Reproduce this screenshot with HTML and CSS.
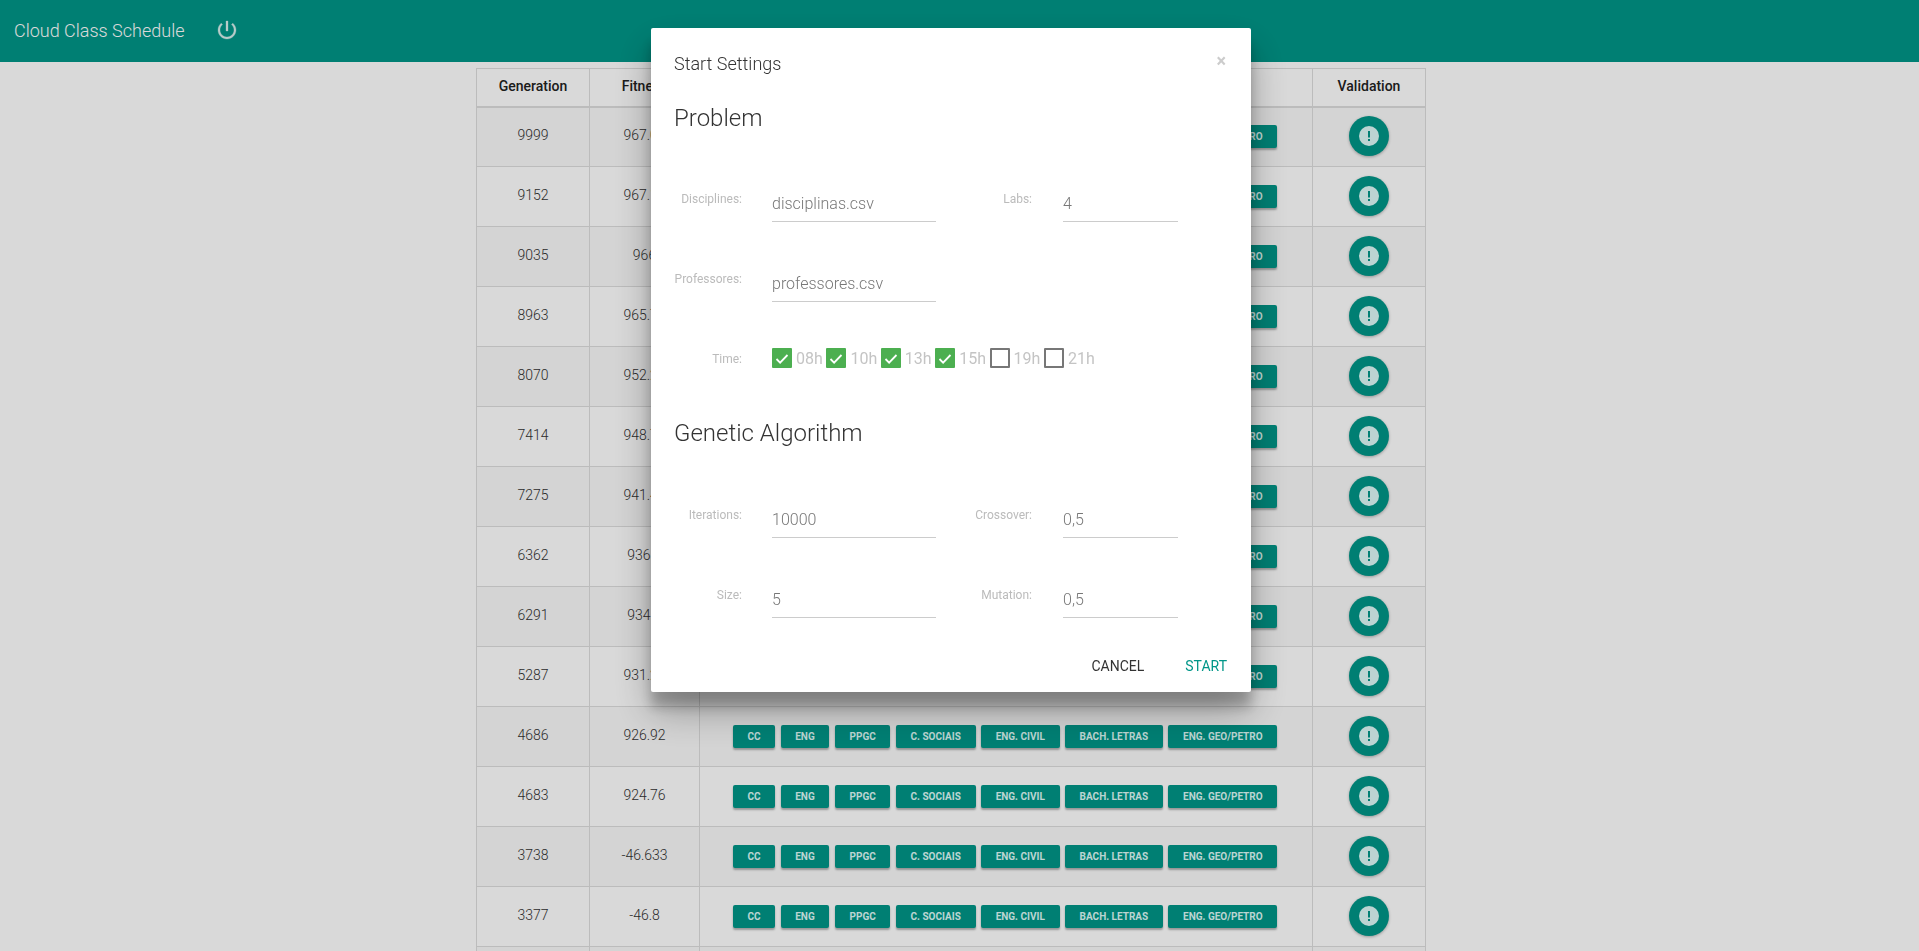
FILE: index.html
```html
<!DOCTYPE html>
<html lang="en">
<head>
    <meta charset="UTF-8">
    <title>Cloud Class Schedule</title>
    <link rel="stylesheet" href="styles.css">
</head>
<body>
    <header class="topbar">
        <span class="brand">Cloud Class Schedule</span>
        <svg class="power" viewBox="0 0 24 24"><path d="M13 3h-2v10h2V3zm4.83 2.17l-1.42 1.42C17.99 7.86 19 9.81 19 12c0 3.87-3.13 7-7 7s-7-3.13-7-7c0-2.19 1.01-4.14 2.58-5.42L6.17 5.17C4.23 6.82 3 9.26 3 12c0 4.97 4.03 9 9 9s9-4.03 9-9c0-2.74-1.23-5.18-3.17-6.83z"/></svg>
    </header>

    <main class="content">
        <table class="results">
            <thead>
                <tr>
                    <th class="col-gen">Generation</th>
                    <th class="col-fit">Fitness</th>
                    <th>Schedules</th>
                    <th class="col-val">Validation</th>
                </tr>
            </thead>
            <tbody id="rows"></tbody>
        </table>
    </main>

    <div class="overlay">
        <div class="modal">
            <div class="modal-head">
                <h4>Start Settings</h4>
                <span class="close">×</span>
            </div>
            <h3 class="first">Problem</h3>
            <div class="field-row">
                <div class="field"><label>Disciplines:</label><span class="input wide">disciplinas.csv</span></div>
                <div class="field"><label class="short">Labs:</label><span class="input">4</span></div>
            </div>
            <div class="field-row">
                <div class="field"><label>Professores:</label><span class="input wide">professores.csv</span></div>
            </div>
            <div class="time-row">
                <label>Time:</label>
                <div class="checks">
                    <span class="check on"><svg viewBox="0 0 20 20"><path d="M4.5 11l3.6 3.6 7.4-7.6"/></svg></span><span class="hour">08h</span>
                    <span class="check on"><svg viewBox="0 0 20 20"><path d="M4.5 11l3.6 3.6 7.4-7.6"/></svg></span><span class="hour">10h</span>
                    <span class="check on"><svg viewBox="0 0 20 20"><path d="M4.5 11l3.6 3.6 7.4-7.6"/></svg></span><span class="hour">13h</span>
                    <span class="check on"><svg viewBox="0 0 20 20"><path d="M4.5 11l3.6 3.6 7.4-7.6"/></svg></span><span class="hour">15h</span>
                    <span class="check"></span><span class="hour">19h</span>
                    <span class="check"></span><span class="hour">21h</span>
                </div>
            </div>
            <h3 class="second">Genetic Algorithm</h3>
            <div class="field-row">
                <div class="field"><label>Iterations:</label><span class="input wide">10000</span></div>
                <div class="field"><label class="short">Crossover:</label><span class="input">0,5</span></div>
            </div>
            <div class="field-row">
                <div class="field"><label>Size:</label><span class="input wide">5</span></div>
                <div class="field"><label class="short">Mutation:</label><span class="input">0,5</span></div>
            </div>
            <div class="modal-foot">
                <button class="flat">Cancel</button>
                <button class="flat primary">Start</button>
            </div>
        </div>
    </div>

    <script>
        var data = [
            ["9999", "967.08"], ["9152", "967.12"], ["9035", "966"], ["8963", "965.72"],
            ["8070", "952.28"], ["7414", "948.76"], ["7275", "941.48"], ["6362", "936.4"],
            ["6291", "934.6"], ["5287", "931.28"], ["4686", "926.92"], ["4683", "924.76"],
            ["3738", "-46.633"], ["3377", "-46.8"]
        ];
        var courses = ["CC", "ENG", "PPGC", "C. SOCIAIS", "ENG. CIVIL", "BACH. LETRAS", "ENG. GEO/PETRO"];
        var btns = courses.map(function(c){ return '<a class="course">' + c + '</a>'; }).join("");
        var icon = '<a class="round"><svg viewBox="0 0 20 20"><circle cx="10" cy="10" r="10" class="disc"/><rect x="9" y="5" width="2" height="6.5" class="mark"/><rect x="9" y="13" width="2" height="2" class="mark"/></svg></a>';
        var html = data.map(function(r){
            return '<tr><td class="num">' + r[0] + '</td><td class="num">' + r[1] + '</td><td class="courses">' + btns + '</td><td class="valid">' + icon + '</td></tr>';
        }).join("");
        // next row only just starts at the bottom of the window
        html += '<tr><td></td><td></td><td></td><td></td></tr>';
        document.getElementById("rows").innerHTML = html;
    </script>
</body>
</html>
```

FILE: styles.css
```css
*{
    box-sizing: border-box;
    margin: 0;
    padding: 0;
}

html, body{
    height: 100%;
    overflow: hidden;
}

body{
    background: #fff;
    color: #333;
    font-family: Roboto, sans-serif;
    font-weight: 300;
    font-size: 14px;
}

.topbar{
    height: 62px;
    background: #009688;
    color: #fff;
    display: flex;
    align-items: center;
    padding: 0 0 2px 14px;
}

.brand{
    font-size: 18px;
    width: 201px;
}

.power{
    width: 24px;
    height: 24px;
    fill: #fff;
    stroke: #fff;
    stroke-width: .3;
    opacity: .85;
}

.content{
    width: 1902px;
    padding-top: 6px;
}

.results{
    width: 950px;
    margin: 0 auto;
    border-collapse: collapse;
    table-layout: fixed;
    text-align: center;
}

.results th, .results td{
    border: 1px solid #ddd;
}

.results th{
    height: 38px;
    padding-bottom: 2px;
    font-weight: 500;
    color: #222;
    border-bottom-width: 2px;
}

.col-gen{ width: 113px; }
.col-fit{ width: 110px; }
.col-val{ width: 113px; }

.results td{
    height: 60px;
}

.results td.num{
    padding-bottom: 3px;
}

.results td.valid{
    padding-bottom: 2px;
}

.results tbody tr:nth-child(odd){
    background: #f9f9f9;
}

.courses{
    font-size: 0;
    padding-right: 2px;
}

.course{
    display: inline-block;
    height: 23px;
    line-height: 23px;
    padding: 0 14.7px;
    margin-right: 5.4px;
    background: #009688;
    color: #ddfaf7;
    font-size: 10px;
    font-weight: 700;
    border-radius: 2px;
    box-shadow: 0 2px 2px rgba(0,0,0,.3);
}

.course:last-child{
    margin-right: 0;
}

.round{
    display: flex;
    align-items: center;
    justify-content: center;
    width: 40px;
    height: 40px;
    margin: 0 auto;
    border-radius: 50%;
    background: #009688;
    box-shadow: 0 1px 3px rgba(0,0,0,.3);
}

.round svg{
    width: 20px;
    height: 20px;
}

.disc{ fill: #ddfaf7; }
.mark{ fill: #009688; }

.overlay{
    position: fixed;
    top: 0;
    left: 0;
    right: 0;
    bottom: 0;
    background: rgba(0,0,0,.15);
    padding: 28px 17px 0 0;
    display: flex;
    justify-content: center;
    align-items: flex-start;
}

.modal{
    width: 600px;
    height: 664px;
    background: #fff;
    border-radius: 2px;
    padding: 24px 19px 0 23px;
    box-shadow: 0 19px 38px rgba(0,0,0,.30), 0 15px 12px rgba(0,0,0,.22);
}

.modal-head{
    display: flex;
    justify-content: space-between;
}

h4{
    font-size: 18px;
    font-weight: 300;
    line-height: 24px;
}

.close{
    font-size: 18px;
    font-weight: 700;
    line-height: 18px;
    color: #ccc;
    margin-right: 6px;
}

h3{
    font-size: 24px;
    font-weight: 300;
    line-height: 32px;
}

h3.first{ margin-top: 26px; margin-bottom: 52px; }
h3.second{ margin-top: 49px; margin-bottom: 53px; }

.field-row{
    display: flex;
    height: 36px;
    margin-bottom: 44px;
}

.field{
    display: flex;
    align-items: flex-start;
}

label{
    display: block;
    width: 68px;
    font-size: 12px;
    font-weight: 400;
    color: #bbb;
    text-align: right;
    margin-right: 30px;
    line-height: 16px;
    padding-top: 5px;
}

label.short{
    width: 96px;
    margin-right: 31px;
}

.input{
    display: block;
    width: 115px;
    height: 36px;
    border-bottom: 1px solid #ccc;
    font-size: 16px;
    color: #777;
    line-height: 36px;
}

.input.wide{
    width: 164px;
}

.time-row{
    display: flex;
    align-items: center;
    height: 20px;
    margin-top: 46px;
}

.time-row label{
    padding-top: 1px;
}

.checks{
    display: flex;
    align-items: center;
}

.check{
    width: 20px;
    height: 20px;
    border: 2px solid #777;
    border-radius: 1px;
}

.check.on{
    border: 0;
    background: #4caf50;
}

.check svg{
    display: block;
    fill: none;
    stroke: #fff;
    stroke-width: 1.8;
}

.hour{
    width: 34.4px;
    padding-left: 4px;
    font-size: 16px;
    font-weight: 400;
    color: #c4c4c4;
}

.modal-foot{
    display: flex;
    justify-content: flex-end;
    margin-top: -4px;
    padding-right: 5px;
}

.flat{
    border: 0;
    background: none;
    font-family: Roboto, sans-serif;
    font-size: 14px;
    font-weight: 400;
    text-transform: uppercase;
    color: #333;
    margin-left: 41px;
}

.flat.primary{
    color: #009688;
}
```
